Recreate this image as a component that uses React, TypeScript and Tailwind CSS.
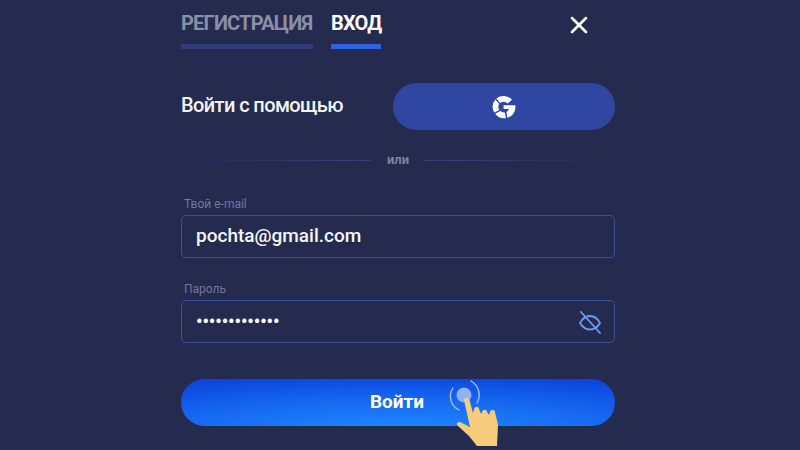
import { X } from 'lucide-react';

function GoogleMark() {
  return (
    <svg width="24" height="24" viewBox="0 0 24 24" fill="none">
      <path d="M20 4.8A11.4 11.4 0 0 0 4.4 3.4L8.2 8A5.4 5.4 0 0 1 15.6 8.6Z" fill="#fff" />
      <path d="M3.4 4.4A11.4 11.4 0 0 0 2.4 17.6L7.4 15A5.4 5.4 0 0 1 7.2 9Z" fill="#fff" />
      <path d="M3.2 18.8A11.4 11.4 0 0 0 14 23.2L12.8 17.4A5.4 5.4 0 0 1 8.4 16Z" fill="#fff" />
      <path d="M15.4 22.8A11.4 11.4 0 0 0 23.4 13V10.2H11.6V14H17A5.4 5.4 0 0 1 14.4 17Z" fill="#fff" />
    </svg>
  );
}

function EyeOff() {
  return (
    <svg width="24" height="24" viewBox="0 0 24 24" fill="none" stroke="#6f9bf2" strokeWidth="1.8" strokeLinecap="round">
      <path d="M2 13C5 7.5 9 6 12 6C15 6 19 7.5 22 13C19 18 15 19.5 12 19.5C9 19.5 5 18 2 13Z" />
      <path d="M3 2L22 23" />
    </svg>
  );
}

function Pointer() {
  return (
    <svg width="60" height="72" viewBox="0 0 60 72" fill="none" className="absolute left-[443px] top-[378px]">
      <path d="M10 10A15 15 0 0 0 16 32" stroke="#a9c6fb" strokeWidth="1.3" strokeLinecap="round" />
      <path d="M28 3A16 16 0 0 1 34 25" stroke="#a9c6fb" strokeWidth="1.3" strokeLinecap="round" />
      <circle cx="21" cy="17" r="7.5" fill="#8fb2f6" />
      <path
        d="M21 22C21 19 26 19 26.5 22L30 35L31 32C31 28 36 28 36 31L38 36L39 34C40 31 44 31 44 34L46 37L47 34C48 31 52 32 52 34L55 47L54 68L34 68L26 58L15 48C13 46 14 44 17 44L27 49Z"
        fill="#f6cb7c"
      />
    </svg>
  );
}

function Field({ label, children }: { label: string; children: React.ReactNode }) {
  return (
    <div>
      <div className="pl-[3px] text-[12px] leading-[14px] text-[#73779a]">{label}</div>
      <div className="mt-[4px] flex h-[43px] items-center justify-between rounded-[5px] border border-[#3c4f9e] pl-[14px] pr-[12px]">
        {children}
      </div>
    </div>
  );
}

export default function App() {
  return (
    <div className="relative h-[450px] w-[800px] overflow-hidden bg-[#252a4f] font-['Roboto',sans-serif]">
      <div className="ml-[181px] flex w-[434px] flex-col">
        <div className="flex pt-[11px]">
          <div className="w-[132px]">
            <div className="text-[20px] font-bold leading-[24px] tracking-[-0.8px] text-[#8b8ea6]">РЕГИСТРАЦИЯ</div>
            <div className="mt-[9px] h-[5px] bg-[#2f3c7a]" />
          </div>
          <div className="ml-[18px] w-[50px]">
            <div className="text-[20px] font-bold leading-[24px] tracking-[-0.8px] text-white">ВХОД</div>
            <div className="mt-[9px] h-[5px] bg-[#2f62e6]" />
          </div>
          <X size={28} strokeWidth={2.2} className="ml-[184px] text-white" />
        </div>

        <div className="mt-[34px] flex items-center justify-between">
          <div className="pb-[3px] text-[20px] font-medium leading-[24px] tracking-[-0.6px] text-[#f2f3f7]">Войти с помощью</div>
          <div className="flex h-[47px] w-[222px] items-center justify-center rounded-full bg-[#2f47a3]">
            <GoogleMark />
          </div>
        </div>

        <div className="mt-[22px] flex h-[16px] items-center">
          <div className="h-px flex-1 bg-gradient-to-r from-transparent to-[#36427f]" />
          <div className="w-[54px] text-center text-[13px] font-bold leading-[16px] text-[#7f8298]">или</div>
          <div className="h-px flex-1 bg-gradient-to-l from-transparent to-[#36427f]" />
        </div>

        <div className="mt-[29px]">
          <Field label="Твой e-mail">
            <span className="pb-[2px] text-[19px] font-medium leading-[24px] text-[#f5f6f9]">pochta@gmail.com</span>
          </Field>
        </div>
        <div className="mt-[24px]">
          <Field label="Пароль">
            <span className="text-[18px] font-bold leading-[24px] tracking-[-0.05px] text-white">•••••••••••••</span>
            <EyeOff />
          </Field>
        </div>

        <div className="mt-[36px] flex h-[47px] items-center justify-center rounded-full bg-[radial-gradient(ellipse_95%_120%_at_50%_110%,#1f8bff_0%,#1668f0_55%,#0b45dc_100%)] pr-[2px] text-[19px] font-bold text-white">
          Войти
        </div>
      </div>
      <Pointer />
    </div>
  );
}
